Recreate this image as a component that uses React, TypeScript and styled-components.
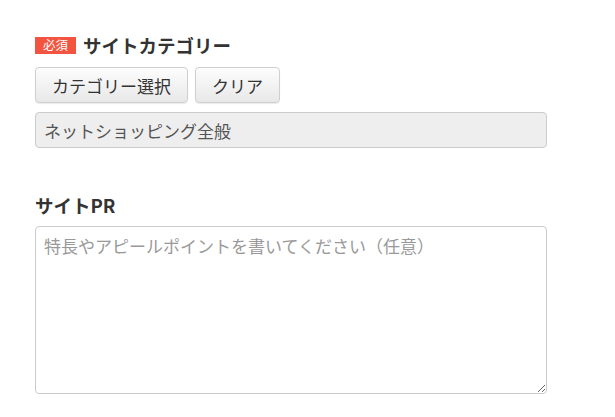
import React from "react";
import styled, { createGlobalStyle } from "styled-components";

const GlobalStyle = createGlobalStyle`
	body {
		margin: 0;
		background: #fff;
		font-family: "Noto Sans CJK JP", "Noto Sans", "Liberation Sans", sans-serif;
		color: #333;
	}
`;

const Page = styled.div`
	width: 512px;
	padding: 34px 0 0 35px;
`;

const Section = styled.section<{ spaced?: boolean }>`
	margin-top: ${(props) => (props.spaced ? "46px" : "0")};
`;

const TitleRow = styled.div`
	display: flex;
	align-items: center;
	gap: 7px;
	height: 22px;
`;

const RequiredBadge = styled.span`
	display: inline-flex;
	align-items: center;
	justify-content: center;
	width: 41px;
	height: 17px;
	background: #f2543f;
	color: #fff;
	font-size: 12.5px;
	line-height: 1;
`;

const Title = styled.h2`
	margin: 0;
	font-size: 18.5px;
	font-weight: 700;
	line-height: 22px;
	color: #333;
`;

const ButtonRow = styled.div`
	display: flex;
	gap: 7px;
	margin-top: 11px;
`;

const Button = styled.button`
	height: 36px;
	padding: 0 16px;
	font-family: inherit;
	font-size: 17px;
	color: #333;
	background: linear-gradient(#fdfdfd, #e8e8e8);
	border: 1px solid #cfcfcf;
	border-radius: 4px;
	box-shadow: 0 1px 1px rgba(0, 0, 0, 0.08);
	cursor: pointer;
`;

const ReadonlyField = styled.div`
	box-sizing: border-box;
	height: 36px;
	margin-top: 9px;
	padding: 0 8px;
	display: flex;
	align-items: center;
	font-size: 17px;
	color: #555;
	background: #eee;
	border: 1px solid #ccc;
	border-radius: 4px;
`;

const TextArea = styled.textarea`
	display: block;
	box-sizing: border-box;
	width: 512px;
	height: 168px;
	margin-top: 10px;
	padding: 6px 8px;
	font-family: inherit;
	font-size: 17px;
	color: #333;
	border: 1px solid #ccc;
	border-radius: 4px;
	resize: vertical;
	&::placeholder {
		color: #999;
	}
`;

const App = (): JSX.Element => (
	<>
		<GlobalStyle />
		<Page>
			<Section>
				<TitleRow>
					<RequiredBadge>必須</RequiredBadge>
					<Title>サイトカテゴリー</Title>
				</TitleRow>
				<ButtonRow>
					<Button type="button">カテゴリー選択</Button>
					<Button type="button">クリア</Button>
				</ButtonRow>
				<ReadonlyField>ネットショッピング全般</ReadonlyField>
			</Section>
			<Section spaced>
				<TitleRow>
					<Title>サイトPR</Title>
				</TitleRow>
				<TextArea placeholder="特長やアピールポイントを書いてください（任意）" />
			</Section>
		</Page>
	</>
);

export default App;
